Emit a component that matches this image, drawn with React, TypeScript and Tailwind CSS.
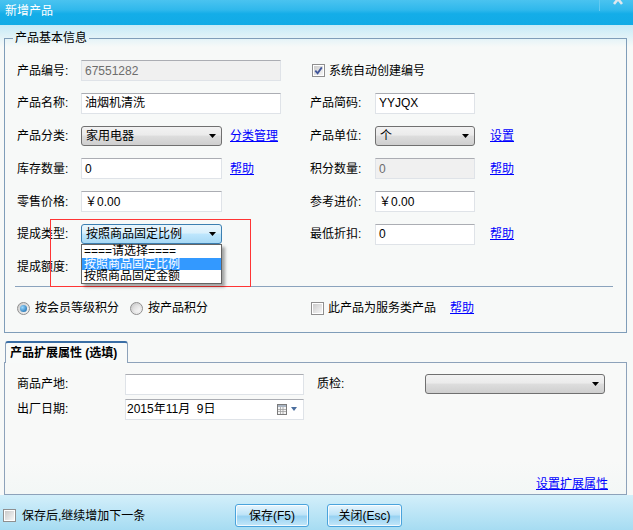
import React from 'react';
import clsx from 'clsx';

type Kids = { children?: React.ReactNode };

function Label({ w, children }: Kids & { w: string }) {
  return <span className={clsx('shrink-0 whitespace-nowrap', w)}>{children}</span>;
}

function TextBox({ value = '', w, disabled }: { value?: string; w: string; disabled?: boolean }) {
  return (
    <div
      className={clsx(
        'flex h-[21px] shrink-0 items-center border border-[#dfe3e8] border-t-[#abadb3] px-[3px]',
        w,
        disabled ? 'bg-[#f0f0f0] text-[#6d6d6d]' : 'bg-white'
      )}
    >
      {value}
    </div>
  );
}

function Arrow() {
  return (
    <svg width="7" height="4" viewBox="0 0 7 4">
      <path d="M0 0H7L3.5 4Z" fill="#000" />
    </svg>
  );
}

function Select({ value = '', w, focused }: { value?: string; w: string; focused?: boolean }) {
  return (
    <div
      className={clsx(
        'flex h-[20px] shrink-0 items-center justify-between rounded-[3px] border pl-[4px] pr-[5px]',
        w,
        focused
          ? 'border-[#3c7fb1] bg-[linear-gradient(#eaf6fd,#d9f0fc_45%,#bee6fd_50%,#a7d9f5)]'
          : 'border-[#707070] bg-[linear-gradient(#f2f2f2,#ebebeb_45%,#dddddd_50%,#cfcfcf)]'
      )}
    >
      <span>{value}</span>
      <Arrow />
    </div>
  );
}

function Link({ children, className }: Kids & { className?: string }) {
  return <a className={clsx('cursor-pointer whitespace-nowrap text-[#0000ff] underline', className)}>{children}</a>;
}

function Check({ checked }: { checked?: boolean }) {
  return (
    <span className="flex h-[13px] w-[13px] shrink-0 items-center justify-center border border-[#8f8f8f] bg-white">
      <span className="flex h-[9px] w-[9px] items-center justify-center bg-[linear-gradient(135deg,#cbcbcb,#f6f6f6)]">
        {checked && (
          <svg width="9" height="9" viewBox="0 0 9 9">
            <path d="M1.3 4.6 L3.6 7.2 L7.8 1.4" fill="none" stroke="#41569a" strokeWidth="1.8" />
          </svg>
        )}
      </span>
    </span>
  );
}

function Radio({ checked }: { checked?: boolean }) {
  return (
    <span className="flex h-[13px] w-[13px] shrink-0 items-center justify-center rounded-full border border-[#8f8f8f] bg-[linear-gradient(135deg,#c9c9c9,#f7f7f7)]">
      {checked ? (
        <span className="h-[7px] w-[7px] rounded-full bg-[radial-gradient(circle_at_35%_35%,#9bd9ff,#0b5fa4)]" />
      ) : (
        <span className="h-[7px] w-[7px] rounded-full bg-[linear-gradient(135deg,#d6d6d6,#fafafa)]" />
      )}
    </span>
  );
}

function Row({ children }: Kids) {
  return <div className="flex h-[21px] items-center">{children}</div>;
}

function Half({ children }: Kids) {
  return <div className="flex w-[293px] shrink-0 items-center">{children}</div>;
}

export default function App() {
  return (
    <div className="relative flex h-[530px] w-[633px] flex-col overflow-hidden bg-[#f7f9f8] font-['Liberation_Sans','Noto_Sans_CJK_SC',sans-serif] text-[12px] leading-[14px] text-black">
      {/* title bar */}
      <div className="relative flex h-[25px] shrink-0 items-center bg-[linear-gradient(#4ac3f0,#2fb8ec_40%,#14ade8_55%,#11abe6)] pb-[3px] pl-[5px] text-white">
        新增产品
        <div className="absolute right-0 top-0 h-[11px] w-[34px] border-l border-[#62caf2]">
          <svg className="absolute left-[13px] top-[-6px]" width="10" height="11" viewBox="0 0 10 11">
            <path d="M1 0 L9 10 M9 0 L1 10" stroke="#dfe8ee" strokeWidth="2.6" />
          </svg>
        </div>
      </div>

      <div className="flex flex-1 flex-col bg-[linear-gradient(#c6eaf7,#f7f9f8_22px)]">
        {/* basic info */}
        <fieldset className="ml-[4px] mr-[6px] mt-[6px] border border-[#7f9db9] p-0">
          <legend className="ml-[8px] px-[2px] leading-[14px]">产品基本信息</legend>
          <div className="flex flex-col gap-[11.8px] pl-[12px] pt-[15px]">
            <Row>
              <Half>
                <Label w="w-[64px]">产品编号:</Label>
                <TextBox w="w-[200px]" value="67551282" disabled />
              </Half>
              <div className="flex items-center gap-[4px] pl-[2px]">
                <Check checked />
                <span>系统自动创建编号</span>
              </div>
            </Row>
            <Row>
              <Half>
                <Label w="w-[64px]">产品名称:</Label>
                <TextBox w="w-[200px]" value="油烟机清洗" />
              </Half>
              <Label w="w-[65px]">产品简码:</Label>
              <TextBox w="w-[100px]" value="YYJQX" />
            </Row>
            <Row>
              <Half>
                <Label w="w-[64px]">产品分类:</Label>
                <Select w="w-[141px]" value="家用电器" />
                <Link className="ml-[8px]">分类管理</Link>
              </Half>
              <Label w="w-[65px]">产品单位:</Label>
              <Select w="w-[100px]" value="个" />
              <Link className="ml-[15px]">设置</Link>
            </Row>
            <Row>
              <Half>
                <Label w="w-[64px]">库存数量:</Label>
                <TextBox w="w-[141px]" value="0" />
                <Link className="ml-[8px]">帮助</Link>
              </Half>
              <Label w="w-[65px]">积分数量:</Label>
              <TextBox w="w-[100px]" value="0" disabled />
              <Link className="ml-[15px]">帮助</Link>
            </Row>
            <Row>
              <Half>
                <Label w="w-[64px]">零售价格:</Label>
                <TextBox w="w-[141px]" value="￥0.00" />
              </Half>
              <Label w="w-[65px]">参考进价:</Label>
              <TextBox w="w-[100px]" value="￥0.00" />
            </Row>
            <Row>
              <Half>
                <Label w="w-[64px]">提成类型:</Label>
                <div className="relative">
                  <Select w="w-[141px]" value="按照商品固定比例" focused />
                  <div className="absolute left-0 top-full z-20 flex w-[141px] flex-col border border-[#646464] bg-white py-0 leading-[12.5px] shadow-[3px_3px_3px_rgba(0,0,0,0.35)]">
                    <div className="px-[2px]">====请选择====</div>
                    <div className="bg-[#3399ff] px-[2px] text-white">按照商品固定比例</div>
                    <div className="px-[2px]">按照商品固定金额</div>
                  </div>
                </div>
              </Half>
              <Label w="w-[65px]">最低折扣:</Label>
              <TextBox w="w-[100px]" value="0" />
              <Link className="ml-[15px]">帮助</Link>
            </Row>
            <Row>
              <Half>
                <Label w="w-[64px]">提成额度:</Label>
                <TextBox w="w-[141px]" />
              </Half>
            </Row>
          </div>
          <div className="ml-[10px] mt-[8px] h-px w-[598px] bg-[#8ba3bd]" />
          <div className="mb-[13px] mt-[11px] flex h-[21px] items-center pl-[12px]">
            <Half>
              <Radio checked />
              <span className="ml-[5px]">按会员等级积分</span>
              <span className="ml-[11px]">
                <Radio />
              </span>
              <span className="ml-[5px]">按产品积分</span>
            </Half>
            <div className="flex items-center pl-[1px]">
              <Check />
              <span className="ml-[4px]">此产品为服务类产品</span>
              <Link className="ml-[14px]">帮助</Link>
            </div>
          </div>
        </fieldset>

        {/* extended properties tab */}
        <div className="ml-[4px] mr-[6px] mt-[8px] flex flex-1 flex-col">
          <div className="relative z-10 -mb-px ml-[1px] flex h-[22px] w-[123px] items-center whitespace-nowrap rounded-t-[3px] border-x border-t-2 border-x-[#8da2ba] border-t-[#3a6ea5] bg-[#f8faf9] pl-[4px] font-bold">
            产品扩展属性 (选填)
          </div>
          <div className="flex flex-1 flex-col border border-[#8da2ba] bg-[linear-gradient(#f8f9f8,#f8f9f8_75%,#f3f7f6)]">
            <div className="flex flex-col gap-[4px] pl-[12px] pt-[11px]">
              <Row>
                <Label w="w-[108px]">商品产地:</Label>
                <TextBox w="w-[179px]" />
                <Label w="ml-[13px] w-[108px]">质检:</Label>
                <Select w="w-[180px]" />
              </Row>
              <Row>
                <Label w="w-[108px]">出厂日期:</Label>
                <div className="flex h-[21px] w-[179px] items-center justify-between border border-[#dfe3e8] border-t-[#abadb3] bg-white pl-[1px] pr-[6px]">
                  <span>2015年11月&nbsp;&nbsp;9日</span>
                  <span className="flex items-center gap-[4px]">
                    <svg width="10" height="11" viewBox="0 0 10 11">
                      <rect x="0.5" y="0.5" width="9" height="10" fill="#f4f4f4" stroke="#7b7b7b" />
                      <rect x="1" y="1" width="8" height="2" fill="#a9b4c2" />
                      <path d="M1 5.5H9M1 7.5H9M3.5 3V10M6 3V10" stroke="#a0a0a0" strokeWidth="0.8" />
                    </svg>
                    <svg width="6" height="4" viewBox="0 0 6 4">
                      <path d="M0 0H6L3 4Z" fill="#4b6e9e" />
                    </svg>
                  </span>
                </div>
              </Row>
            </div>
            <Link className="mb-[3px] mr-[18px] mt-auto self-end">设置扩展属性</Link>
          </div>
        </div>
      </div>

      {/* footer */}
      <div className="flex h-[35px] shrink-0 items-center bg-[linear-gradient(#d3effa,#a6dcf2)] pt-[6px]">
        <div className="flex w-[235px] items-center pl-[3px]">
          <Check />
          <span className="ml-[6px]">保存后,继续增加下一条</span>
        </div>
        <button className="flex h-[23px] w-[74px] items-center justify-center rounded-[3px] border border-[#4aa3dc] bg-[linear-gradient(#e6f5fd,#bfe4f8_45%,#98d2f2_55%,#c4e7f9)] shadow-[inset_0_0_0_1px_rgba(255,255,255,0.8)]">
          保存(F5)
        </button>
        <button className="ml-[18px] flex h-[23px] w-[75px] items-center justify-center rounded-[3px] border border-[#4aa3dc] bg-[linear-gradient(#e6f5fd,#bfe4f8_45%,#98d2f2_55%,#c4e7f9)] shadow-[inset_0_0_0_1px_rgba(255,255,255,0.8)]">
          关闭(Esc)
        </button>
      </div>

      {/* red annotation box */}
      <div className="pointer-events-none absolute left-[50px] top-[219px] h-[68px] w-[201px] border border-[#ff3535]" />
    </div>
  );
}
